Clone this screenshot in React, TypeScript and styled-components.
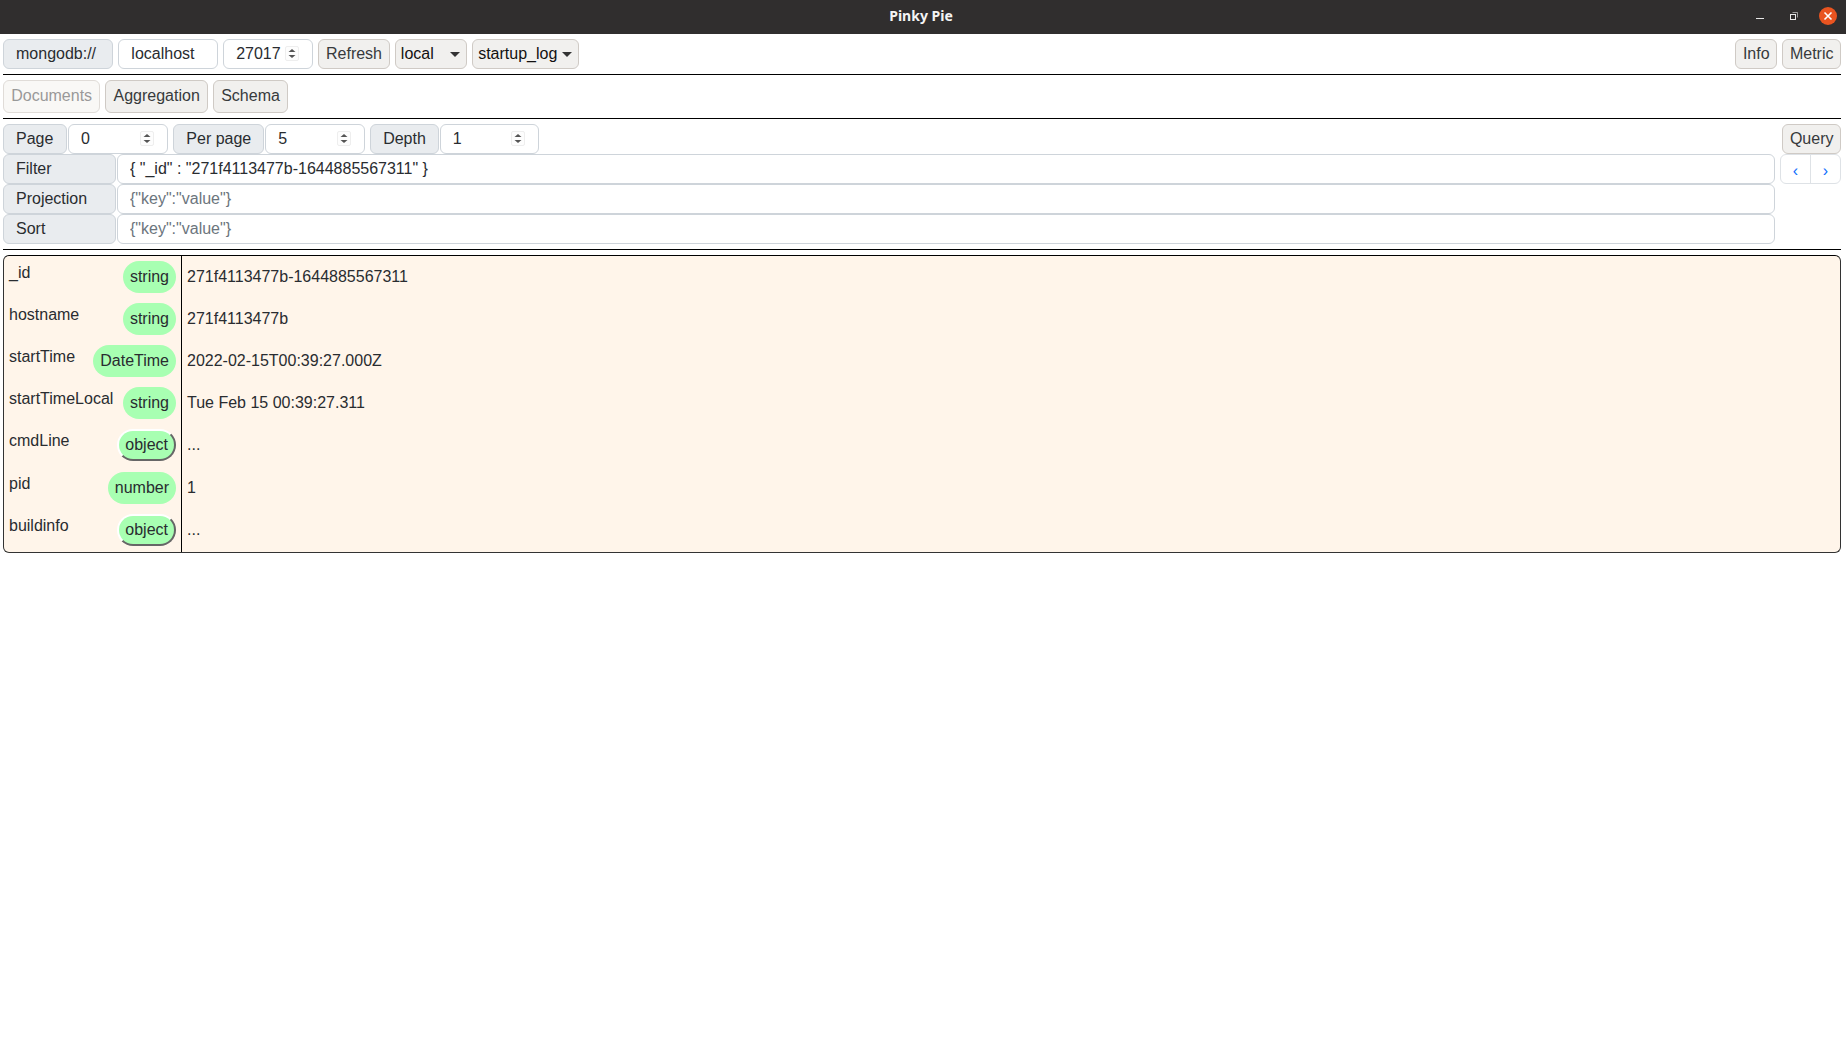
import React, { FC } from "react";
import styled, { createGlobalStyle } from "styled-components";

const fields = [
	{ key: "_id", type: "string", value: "271f4113477b-1644885567311", height: 42 },
	{ key: "hostname", type: "string", value: "271f4113477b", height: 42 },
	{ key: "startTime", type: "DateTime", value: "2022-02-15T00:39:27.000Z", height: 42 },
	{ key: "startTimeLocal", type: "string", value: "Tue Feb 15 00:39:27.311", height: 42 },
	{ key: "cmdLine", type: "object", value: "...", height: 43 },
	{ key: "pid", type: "number", value: "1", height: 42 },
	{ key: "buildinfo", type: "object", value: "...", height: 43 },
];

const NumberField: FC<{ value: number; width: number }> = ({ value, width }) => {
	return (
		<NumberWrap $width={width}>
			<NumberInput type="number" defaultValue={value} />
			<Spinner width="14" height="15" viewBox="0 0 14 15">
				<rect x="0.5" y="0.5" width="13" height="14" rx="1.5" fill="#fdfdfd" stroke="#eeeeee" />
				<path d="M7 3l3.5 3h-7z" fill="#555" />
				<path d="M7 12l3.5-3h-7z" fill="#555" />
			</Spinner>
		</NumberWrap>
	);
};

const App: FC = () => {
	return (
		<>
			<GlobalStyle />
			<TitleBar>
				<span />
				<Title>Pinky Pie</Title>
				<WindowControls>
					<svg width="10" height="10" viewBox="0 0 10 10">
						<rect x="1" y="7" width="8" height="1" fill="#e8e8e8" />
					</svg>
					<svg width="10" height="10" viewBox="0 0 10 10" fill="none" stroke="#e8e8e8">
						<rect x="1.5" y="3.5" width="5" height="5" />
						<path d="M3.5 1.5h5v5" strokeOpacity="0.6" />
					</svg>
					<CloseButton>
						<svg width="10" height="10" viewBox="0 0 10 10" stroke="#fff" strokeWidth="1.6">
							<path d="M1.5 1.5l7 7M8.5 1.5l-7 7" />
						</svg>
					</CloseButton>
				</WindowControls>
			</TitleBar>
			<Page>
				<Toolbar>
					<Group>
						<Addon $width={110}>mongodb://</Addon>
						<TextInput $width={99.5} type="text" defaultValue="localhost" />
						<NumberField value={27017} width={90} />
						<Button>Refresh</Button>
						<SelectBox $width={72}>
							<NativeSelect defaultValue="local">
								<option>admin</option>
								<option>config</option>
								<option>local</option>
							</NativeSelect>
						</SelectBox>
						<SelectBox $width={107}>
							<NativeSelect defaultValue="startup_log">
								<option>startup_log</option>
							</NativeSelect>
						</SelectBox>
					</Group>
					<Group>
						<Button>Info</Button>
						<Button>Metric</Button>
					</Group>
				</Toolbar>
				<Rule />
				<Tabs>
					<Tab disabled>Documents</Tab>
					<Tab>Aggregation</Tab>
					<Tab>Schema</Tab>
				</Tabs>
				<Rule />
				<QueryRow>
					<Group>
						<InputGroup>
							<Addon $width={64}>Page</Addon>
							<NumberField value={0} width={100} />
						</InputGroup>
						<InputGroup>
							<Addon $width={91}>Per page</Addon>
							<NumberField value={5} width={99.5} />
						</InputGroup>
						<InputGroup>
							<Addon $width={68.5}>Depth</Addon>
							<NumberField value={1} width={99.5} />
						</InputGroup>
					</Group>
					<Button>Query</Button>
				</QueryRow>
				<QueryForm>
					<QueryFields>
						<InputGroup>
							<Addon $width={113}>Filter</Addon>
							<FieldInput type="text" defaultValue={'{ "_id" : "271f4113477b-1644885567311" }'} />
						</InputGroup>
						<InputGroup>
							<Addon $width={113}>Projection</Addon>
							<FieldInput type="text" placeholder={'{"key":"value"}'} />
						</InputGroup>
						<InputGroup>
							<Addon $width={113}>Sort</Addon>
							<FieldInput type="text" placeholder={'{"key":"value"}'} />
						</InputGroup>
					</QueryFields>
					<Pagination>
						<PageLink>‹</PageLink>
						<PageLink>›</PageLink>
					</Pagination>
				</QueryForm>
				<Rule />
				<DocumentCard>
					{fields.map((field) => {
						return (
							<DocumentRow key={field.key} $height={field.height}>
								<KeyCell>
									<KeyName>{field.key}</KeyName>
									{field.type === "object" ? (
										<ObjectPill>{field.type}</ObjectPill>
									) : (
										<TypePill>{field.type}</TypePill>
									)}
								</KeyCell>
								<ValueCell>{field.value}</ValueCell>
							</DocumentRow>
						);
					})}
				</DocumentCard>
			</Page>
		</>
	);
};

export default App;

const GlobalStyle = createGlobalStyle`
	* {
		box-sizing: border-box;
	}

	body {
		margin: 0;
		background: #fff;
		color: #292c30;
		font-family: "Liberation Sans", Arial, sans-serif;
		font-size: 16px;
		line-height: 24px;
	}
`;

const TitleBar = styled.div`
	height: 34px;
	padding: 0 9px 3px 5px;
	display: grid;
	grid-template-columns: 1fr auto 1fr;
	align-items: center;
	background: #302e2e;
`;

const Title = styled.div`
	color: #f4f4f4;
	font-family: "Noto Sans", sans-serif;
	font-size: 14px;
	font-weight: 700;
	line-height: 30px;
`;

const WindowControls = styled.div`
	display: flex;
	justify-content: flex-end;
	align-items: center;
	gap: 20px;

	& > svg:first-child {
		margin-right: 4px;
	}
`;

const CloseButton = styled.div`
	width: 18px;
	height: 18px;
	display: flex;
	align-items: center;
	justify-content: center;
	border-radius: 50%;
	background: #e95420;
`;

const Page = styled.div`
	padding: 5px 5px 0 3px;
`;

const Toolbar = styled.div`
	display: flex;
	justify-content: space-between;
`;

const Group = styled.div`
	display: flex;
	gap: 5.33px;
`;

const InputGroup = styled.div`
	display: flex;
	gap: 1px;
`;

const Addon = styled.span<{ $width: number }>`
	width: ${(props) => props.$width}px;
	height: 30px;
	padding: 2px 12px;
	border: 1px solid #ced4da;
	border-radius: 6px;
	background: #e9ecef;
	white-space: nowrap;
`;

const TextInput = styled.input<{ $width?: number }>`
	width: ${(props) => (props.$width ? `${props.$width}px` : "auto")};
	height: 30px;
	padding: 2px 12px;
	border: 1px solid #ced4da;
	border-radius: 6px;
	background: #fff;
	color: #292c30;
	font: inherit;
	outline: none;

	&::placeholder {
		color: #6c757d;
	}
`;

const NumberWrap = styled.div<{ $width: number }>`
	position: relative;
	width: ${(props) => props.$width}px;
	height: 30px;
`;

const NumberInput = styled(TextInput)`
	width: 100%;
	appearance: textfield;

	&::-webkit-inner-spin-button {
		appearance: none;
	}
`;

const Spinner = styled.svg`
	position: absolute;
	top: 7px;
	right: 14px;
`;

const FieldInput = styled(TextInput)`
	flex: 1;
	min-width: 0;
`;

const Button = styled.button`
	height: 30px;
	padding: 0 6.5px;
	border: 1px solid #cfcac5;
	border-radius: 6px;
	background: #f1f0ee;
	color: #373a3c;
	font: inherit;
`;

const SelectBox = styled.div<{ $width: number }>`
	position: relative;
	width: ${(props) => props.$width}px;
	height: 30px;

	&::after {
		content: "";
		position: absolute;
		top: 13px;
		right: 7px;
		border-style: solid;
		border-width: 5px 5px 0;
		border-color: #333 transparent transparent;
		pointer-events: none;
	}
`;

const NativeSelect = styled.select`
	width: 100%;
	height: 30px;
	padding: 0 5px;
	appearance: none;
	border: 1px solid #cfcac5;
	border-radius: 6px;
	background-color: #f1f0ee;
	color: #111;
	font: inherit;
`;

const Rule = styled.hr`
	height: 1px;
	margin: 5px 0;
	border: 0;
	background: #000;
`;

const Tabs = styled.div`
	display: flex;
	gap: 5px;
`;

const Tab = styled(Button)`
	height: 33px;
	padding: 0 7.2px 2px;

	&:disabled {
		border-color: #e0dcd8;
		background: #f9f8f6;
		color: #999;
	}
`;

const QueryRow = styled.div`
	display: flex;
	justify-content: space-between;
`;

const QueryForm = styled.div`
	display: flex;
	gap: 5px;
`;

const QueryFields = styled.div`
	flex: 1;
	display: flex;
	flex-direction: column;
`;

const Pagination = styled.div`
	width: 61px;
	height: 30px;
	display: flex;
	border: 1px solid #dee2e6;
	border-radius: 6px;
`;

const PageLink = styled.a`
	flex: 1;
	padding-top: 4px;
	text-align: center;
	color: #0d6efd;

	& + & {
		border-left: 1px solid #dee2e6;
	}
`;

const DocumentCard = styled.div`
	border: 1px solid #333;
	border-top-color: #000;
	border-radius: 6px;
	background: #fff5ea;
	overflow: hidden;
`;

const DocumentRow = styled.div<{ $height: number }>`
	height: ${(props) => props.$height}px;
	display: flex;
`;

const KeyCell = styled.div`
	width: 178px;
	padding: 5px 5px 0 5px;
	display: flex;
	justify-content: space-between;
	align-items: flex-start;
	gap: 8px;
	border-right: 1px solid #000;
`;

const KeyName = styled.span`
	white-space: nowrap;
`;

const TypePill = styled.span`
	height: 32px;
	padding: 4px 7px;
	border-radius: 16px;
	background: #a8ffb2;
	white-space: nowrap;
`;

const ObjectPill = styled.button`
	height: 32px;
	padding: 0 6px;
	border: 2px solid;
	border-color: #fff #666 #666 #fff;
	border-radius: 16px;
	background: #a8ffb2;
	color: inherit;
	font: inherit;
`;

const ValueCell = styled.div`
	padding: 5px 0 0 5px;
	line-height: 32px;
`;
